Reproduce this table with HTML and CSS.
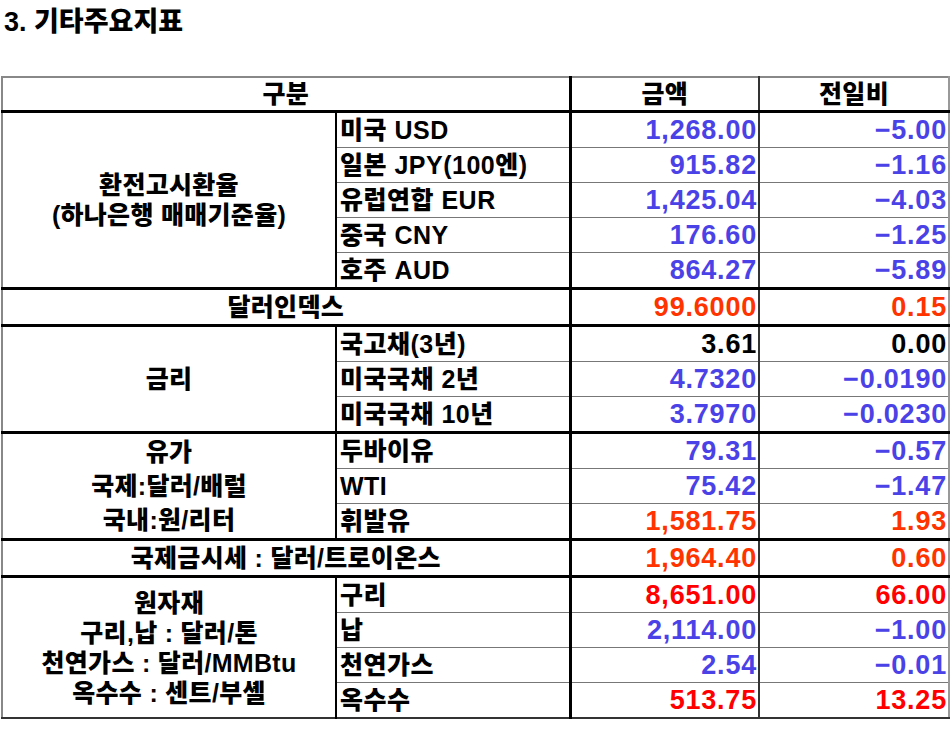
FILE: index.html
```html
<!DOCTYPE html>
<html lang="ko">
<head>
    <meta charset="UTF-8">
    <meta name="viewport" content="width=device-width, initial-scale=1.0">
    <title>기타주요지표</title>
    <link rel="stylesheet" href="styles.css">
</head>
<body>
    <h3 class="title">3. 기타주요지표</h3>

    <table class="index-table">
        <colgroup>
            <col class="col-group">
            <col class="col-item">
            <col class="col-amount">
            <col class="col-diff">
        </colgroup>
        <thead>
            <tr>
                <th colspan="2">구분</th>
                <th>금액</th>
                <th>전일비</th>
            </tr>
        </thead>
        <tbody>
            <!-- 환율 -->
            <tr class="group-start">
                <td class="group" rowspan="5">환전고시환율<br>(하나은행 매매기준율)</td>
                <td class="item">미국 USD</td>
                <td class="num down">1,268.00</td>
                <td class="num down">−5.00</td>
            </tr>
            <tr>
                <td class="item">일본 JPY(100엔)</td>
                <td class="num down">915.82</td>
                <td class="num down">−1.16</td>
            </tr>
            <tr>
                <td class="item">유럽연합 EUR</td>
                <td class="num down">1,425.04</td>
                <td class="num down">−4.03</td>
            </tr>
            <tr>
                <td class="item">중국 CNY</td>
                <td class="num down">176.60</td>
                <td class="num down">−1.25</td>
            </tr>
            <tr>
                <td class="item">호주 AUD</td>
                <td class="num down">864.27</td>
                <td class="num down">−5.89</td>
            </tr>

            <tr class="group-start">
                <td class="group" colspan="2">달러인덱스</td>
                <td class="num up">99.6000</td>
                <td class="num up">0.15</td>
            </tr>

            <!-- 금리 -->
            <tr class="group-start">
                <td class="group" rowspan="3">금리</td>
                <td class="item">국고채(3년)</td>
                <td class="num">3.61</td>
                <td class="num">0.00</td>
            </tr>
            <tr>
                <td class="item">미국국채 2년</td>
                <td class="num down">4.7320</td>
                <td class="num down">−0.0190</td>
            </tr>
            <tr>
                <td class="item">미국국채 10년</td>
                <td class="num down">3.7970</td>
                <td class="num down">−0.0230</td>
            </tr>

            <!-- 유가 -->
            <tr class="group-start">
                <td class="group tall" rowspan="3">유가<br>국제:달러/배럴<br>국내:원/리터</td>
                <td class="item">두바이유</td>
                <td class="num down">79.31</td>
                <td class="num down">−0.57</td>
            </tr>
            <tr>
                <td class="item">WTI</td>
                <td class="num down">75.42</td>
                <td class="num down">−1.47</td>
            </tr>
            <tr>
                <td class="item">휘발유</td>
                <td class="num up">1,581.75</td>
                <td class="num up">1.93</td>
            </tr>

            <tr class="group-start">
                <td class="group" colspan="2">국제금시세 : 달러/트로이온스</td>
                <td class="num up">1,964.40</td>
                <td class="num up">0.60</td>
            </tr>

            <!-- 원자재 -->
            <tr class="group-start">
                <td class="group" rowspan="4">원자재<br>구리,납 : 달러/톤<br>천연가스 : 달러/MMBtu<br>옥수수 : 센트/부셸</td>
                <td class="item">구리</td>
                <td class="num red">8,651.00</td>
                <td class="num red">66.00</td>
            </tr>
            <tr>
                <td class="item">납</td>
                <td class="num down">2,114.00</td>
                <td class="num down">−1.00</td>
            </tr>
            <tr>
                <td class="item">천연가스</td>
                <td class="num down">2.54</td>
                <td class="num down">−0.01</td>
            </tr>
            <tr class="last">
                <td class="item">옥수수</td>
                <td class="num red">513.75</td>
                <td class="num red">13.25</td>
            </tr>
        </tbody>
    </table>
</body>
</html>
```

FILE: styles.css
```css
body {
    margin: 0;
    font-family: "Liberation Sans", "Noto Sans CJK KR", sans-serif;
    font-weight: 900;
    color: #000;
    background-color: #fff;
}

.title {
    margin: 0;
    padding: 6px 0 0 4px;
    height: 76px;
    box-sizing: border-box;
    font-size: 27px;
    font-weight: 900;
    line-height: 32px;
}

.index-table {
    width: 947px;
    margin-left: 1px;
    border-collapse: collapse;
    table-layout: fixed;
    border-top: 2px solid #888;
    border-left: 2px solid #888;
    border-right: 2px solid #999;
    border-bottom: 2px solid #333;
}

.col-group { width: 334px; }
.col-item { width: 234px; }
.col-amount { width: 189px; }
.col-diff { width: 190px; }

th,
td {
    padding: 0;
    height: 34px;
    font-size: 25px;
    font-weight: 900;
    line-height: 30px;
    letter-spacing: 0.3px;
    white-space: nowrap;
}

th {
    height: 32px;
    text-align: center;
    border-bottom: 3px solid #000;
}

th:nth-child(1),
td.group,
td.item {
    border-right: 3px solid #000;
}

th:nth-child(2) {
    border-right: 2px solid #333;
}

td {
    border-top: 1px solid #777;
}

tr.group-start td {
    border-top: 3px solid #000;
}

tr:first-child td {
    border-top: none;
}

.group {
    text-align: center;
    line-height: 30px;
}

.group.tall {
    line-height: 34px;
}

.group[rowspan] {
    border-right: 2px solid #000;
}

.item {
    padding-left: 3px;
    letter-spacing: 0.5px;
}

.num {
    text-align: right;
    padding-right: 1px;
    font-size: 27px;
    letter-spacing: 0.8px;
}

.num + .num {
    border-left: 2px solid #333;
}

.down {
    color: #4a42e6;
}

.up {
    color: #ff3300;
}

.red {
    color: #ff0000;
}
```
